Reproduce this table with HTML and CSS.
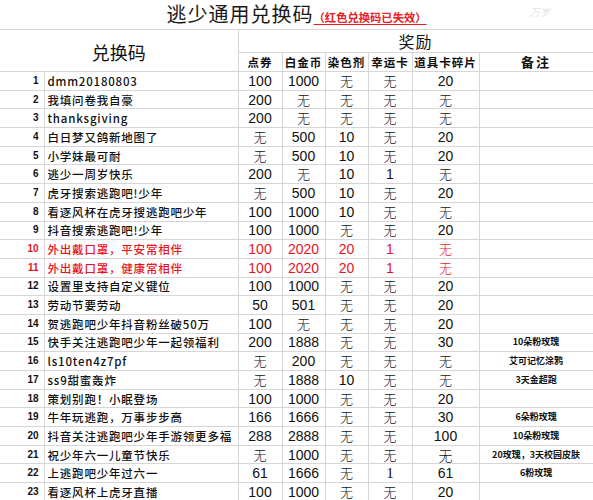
FILE: index.html
```html
<!DOCTYPE html>
<html lang="zh">
<head>
<meta charset="utf-8">
<title>逃少通用兑换码</title>
<link rel="stylesheet" href="styles.css">
</head>
<body>
<table class="sheet">
  <colgroup>
    <col class="c-idx"><col class="c-code"><col class="c-a"><col class="c-b"><col class="c-c"><col class="c-d"><col class="c-e"><col class="c-note">
  </colgroup>
  <tr class="r-title">
    <td colspan="8" class="title-cell">
      <span class="title">逃少通用兑换码</span><span class="title-note">（红色兑换码已失效）</span>
      <span class="watermark">万岁</span>
    </td>
  </tr>
  <tr class="r-head">
    <td colspan="2" rowspan="2" class="h-code">兑换码</td>
    <td colspan="6" class="h-reward">奖励</td>
  </tr>
  <tr class="r-sub">
    <td class="h-sub">点券</td><td class="h-sub">白金币</td><td class="h-sub">染色剂</td><td class="h-sub">幸运卡</td><td class="h-sub">道具卡碎片</td><td class="h-note">备注</td>
  </tr>
  <tr><td class="idx">1</td><td class="code">dmm20180803</td><td class="n">100</td><td class="n">1000</td><td class="w">无</td><td class="w">无</td><td class="n">20</td><td class="note"></td></tr>
  <tr><td class="idx">2</td><td class="code">我填问卷我自豪</td><td class="n">200</td><td class="w">无</td><td class="w">无</td><td class="w">无</td><td class="w">无</td><td class="note"></td></tr>
  <tr><td class="idx">3</td><td class="code">thanksgiving</td><td class="n">200</td><td class="w">无</td><td class="w">无</td><td class="w">无</td><td class="w">无</td><td class="note"></td></tr>
  <tr><td class="idx">4</td><td class="code">白日梦又鸽新地图了</td><td class="w">无</td><td class="n">500</td><td class="n">10</td><td class="w">无</td><td class="n">20</td><td class="note"></td></tr>
  <tr><td class="idx">5</td><td class="code">小学妹最可耐</td><td class="w">无</td><td class="n">500</td><td class="n">10</td><td class="w">无</td><td class="n">20</td><td class="note"></td></tr>
  <tr><td class="idx">6</td><td class="code">逃少一周岁快乐</td><td class="n">200</td><td class="w">无</td><td class="n">10</td><td class="n">1</td><td class="w">无</td><td class="note"></td></tr>
  <tr><td class="idx">7</td><td class="code">虎牙搜索逃跑吧!少年</td><td class="w">无</td><td class="n">500</td><td class="n">10</td><td class="w">无</td><td class="n">20</td><td class="note"></td></tr>
  <tr><td class="idx">8</td><td class="code">看逐风杯在虎牙搜逃跑吧少年</td><td class="n">100</td><td class="n">1000</td><td class="n">10</td><td class="w">无</td><td class="w">无</td><td class="note"></td></tr>
  <tr><td class="idx">9</td><td class="code">抖音搜索逃跑吧!少年</td><td class="n">100</td><td class="n">1000</td><td class="w">无</td><td class="w">无</td><td class="n">20</td><td class="note"></td></tr>
  <tr class="expired"><td class="idx">10</td><td class="code">外出戴口罩，平安常相伴</td><td class="n">100</td><td class="n">2020</td><td class="n">20</td><td class="n">1</td><td class="w">无</td><td class="note"></td></tr>
  <tr class="expired"><td class="idx">11</td><td class="code">外出戴口罩，健康常相伴</td><td class="n">100</td><td class="n">2020</td><td class="n">20</td><td class="n">1</td><td class="w">无</td><td class="note"></td></tr>
  <tr><td class="idx">12</td><td class="code">设置里支持自定义键位</td><td class="n">100</td><td class="n">1000</td><td class="w">无</td><td class="w">无</td><td class="n">20</td><td class="note"></td></tr>
  <tr><td class="idx">13</td><td class="code">劳动节要劳动</td><td class="n">50</td><td class="n">501</td><td class="w">无</td><td class="w">无</td><td class="n">20</td><td class="note"></td></tr>
  <tr><td class="idx">14</td><td class="code">贺逃跑吧少年抖音粉丝破50万</td><td class="n">100</td><td class="w">无</td><td class="w">无</td><td class="w">无</td><td class="n">20</td><td class="note"></td></tr>
  <tr><td class="idx">15</td><td class="code">快手关注逃跑吧少年一起领福利</td><td class="n">200</td><td class="n">1888</td><td class="w">无</td><td class="w">无</td><td class="n">30</td><td class="note">10朵粉玫瑰</td></tr>
  <tr><td class="idx">16</td><td class="code">ls10ten4z7pf</td><td class="w">无</td><td class="n">200</td><td class="w">无</td><td class="w">无</td><td class="w">无</td><td class="note">艾可记忆涂鸦</td></tr>
  <tr><td class="idx">17</td><td class="code">ss9甜蜜轰炸</td><td class="w">无</td><td class="n">1888</td><td class="n">10</td><td class="w">无</td><td class="w">无</td><td class="note">3天金超跑</td></tr>
  <tr><td class="idx">18</td><td class="code">策划别跑！小眠登场</td><td class="n">100</td><td class="n">1000</td><td class="w">无</td><td class="w">无</td><td class="n">20</td><td class="note"></td></tr>
  <tr><td class="idx">19</td><td class="code">牛年玩逃跑，万事步步高</td><td class="n">166</td><td class="n">1666</td><td class="w">无</td><td class="w">无</td><td class="n">30</td><td class="note">6朵粉玫瑰</td></tr>
  <tr><td class="idx">20</td><td class="code">抖音关注逃跑吧少年手游领更多福</td><td class="n">288</td><td class="n">2888</td><td class="w">无</td><td class="w">无</td><td class="n">100</td><td class="note">10朵粉玫瑰</td></tr>
  <tr><td class="idx">21</td><td class="code">祝少年六一儿童节快乐</td><td class="w">无</td><td class="n">1000</td><td class="w">无</td><td class="w">无</td><td class="w big">无</td><td class="note">20玫瑰，3天校园皮肤</td></tr>
  <tr><td class="idx">22</td><td class="code">上逃跑吧少年过六一</td><td class="n">61</td><td class="n">1666</td><td class="w">无</td><td class="n serif">1</td><td class="n">61</td><td class="note">6粉玫瑰</td></tr>
  <tr><td class="idx">23</td><td class="code">看逐风杯上虎牙直播</td><td class="n">100</td><td class="n">1000</td><td class="w">无</td><td class="w">无</td><td class="n">20</td><td class="note"></td></tr>
</table>
</body>
</html>
```

FILE: styles.css
```css
html, body {
  margin: 0;
  padding: 0;
  background: #ffffff;
}

body {
  width: 593px;
  height: 500px;
  overflow: hidden;
  font-family: "Noto Sans CJK SC", "Liberation Sans", sans-serif;
  color: #111;
}

.sheet {
  width: 593px;
  table-layout: fixed;
  border-collapse: collapse;
  border-spacing: 0;
}

.c-idx { width: 44px; }
.c-code { width: 194px; }
.c-a { width: 44px; }
.c-b { width: 43px; }
.c-c { width: 43px; }
.c-d { width: 44px; }
.c-e { width: 67px; }
.c-note { width: 114px; }

.sheet td {
  border: 1px solid #d6d6d6;
  padding: 0;
  height: 17.7px;
  line-height: 14px;
  white-space: nowrap;
  vertical-align: middle;
}

.sheet tr.r-title td {
  height: 26px;
  border-top: none;
  border-left: none;
  border-right: none;
}

.title-cell {
  position: relative;
  text-align: center;
  line-height: 24px !important;
  padding-top: 2px !important;
}

.title {
  font-size: 20px;
  letter-spacing: 1px;
  font-weight: 400;
  color: #1a1a1a;
}

.title-note {
  font-size: 11.3px;
  font-weight: 700;
  color: #e8201e;
  text-decoration: underline;
  text-underline-offset: 2px;
}

.watermark {
  position: absolute;
  left: 530px;
  top: 6px;
  font-size: 10px;
  line-height: 12px;
  font-style: italic;
  color: #e4e4e4;
}

.sheet tr.r-head td {
  height: 22px;
}

.sheet tr.r-sub td {
  height: 18px;
}

.h-code {
  text-align: center;
  font-size: 18px;
  line-height: 24px !important;
  padding-top: 2px !important;
  border-left: none !important;
}

.h-reward {
  text-align: center;
  font-size: 16px;
  line-height: 20px !important;
  letter-spacing: 1px;
}

.h-sub {
  text-align: center;
  font-size: 11.5px;
  font-weight: 700;
  letter-spacing: 1px;
}

.h-note {
  text-align: center;
  font-size: 13px;
  font-weight: 700;
  letter-spacing: 2px;
}

.idx {
  text-align: right;
  padding-right: 5px !important;
  font-family: "Liberation Sans", sans-serif;
  font-size: 10px;
  font-weight: 700;
  border-left: none !important;
}

.code {
  text-align: left;
  padding-left: 3px !important;
  font-size: 11.5px;
  font-weight: 500;
  letter-spacing: 0.8px;
}

.n {
  text-align: center;
  font-family: "Liberation Sans", sans-serif;
  font-size: 14px;
}

.serif {
  font-family: "Liberation Serif", serif;
  font-size: 15px;
}

.w {
  text-align: center;
  font-size: 13px;
  font-weight: 300;
}

.big {
  font-size: 14px;
}

.note {
  text-align: center;
  font-size: 9px;
  font-weight: 700;
}

.expired td {
  color: #e8141c;
}
```
